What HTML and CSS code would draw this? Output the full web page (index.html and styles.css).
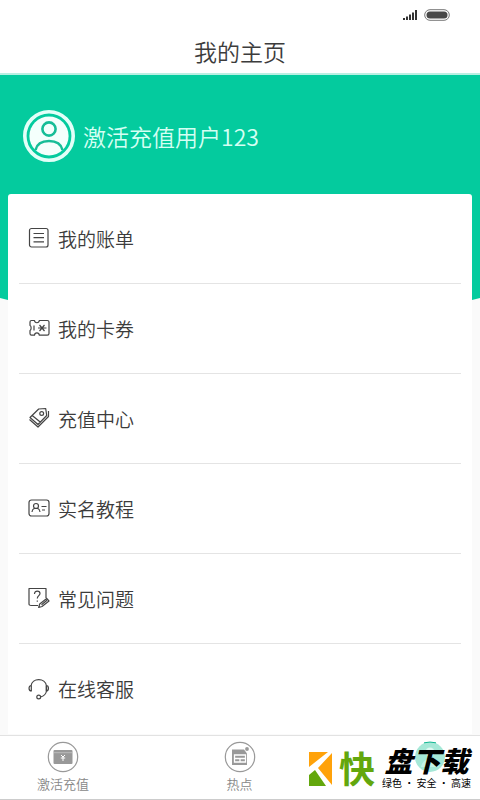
FILE: index.html
```html
<!DOCTYPE html>
<html lang="zh-CN">
<head>
<meta charset="utf-8">
<meta name="viewport" content="width=device-width, initial-scale=1">
<title>我的主页</title>
<link rel="stylesheet" href="styles.css">
</head>
<body>
<header class="top">
  <div class="status">
    <svg width="14" height="12" viewBox="0 0 14 12" fill="#333" aria-hidden="true"><path d="M0 9h2v2H0zM3 7.500h2V11H3zM6 5.500h2V11H6zM9 3.500h2V11H9zM12 1h2v10h-2z"/></svg>
    <svg width="26" height="12" viewBox="0 0 26 12" aria-hidden="true"><rect x=".7" y=".7" width="24.600" height="10.600" rx="5.300" fill="#fff" stroke="#777"/><rect x="2.500" y="2.500" width="21" height="7" rx="3.500" fill="#484848"/></svg>
  </div>
  <h1 class="title">我的主页</h1>
</header>
<main class="page">
  <section class="hero">
    <svg class="avatar" width="52" height="52" viewBox="0 0 52 52" aria-hidden="true">
      <circle cx="26" cy="26" r="24.200" fill="none" stroke="#e2fff8" stroke-width="3.600"/>
      <circle cx="26" cy="26" r="19.600" fill="#f4fffc"/>
      <circle cx="26" cy="19" r="6.600" fill="none" stroke="#17bd97" stroke-width="2.600"/>
      <path d="M12.500 40C14 33.500 19 31 26 31s12 2.500 13.500 9" fill="none" stroke="#17bd97" stroke-width="2.600"/>
    </svg>
    <p class="user">激活充值用户123</p>
  </section>
  <nav class="card">
    <a class="row" href="#bill">
      <svg class="icon" viewBox="0 0 22 22" aria-hidden="true"><rect x="1.500" y="1.500" width="18.500" height="18.500" rx="2"/><path d="M5.500 6.500h10.500M5.500 10.700h10.500M5.500 14.900h10.500"/></svg>
      <span>我的账单</span></a>
    <a class="row" href="#coupon">
      <svg class="icon" viewBox="0 0 22 22" aria-hidden="true"><path d="M3.500 3.500h3c.3 3 4.500 3 4.800 0h8c1 0 1.700.7 1.700 1.500v11.500c0 1-.7 1.700-1.700 1.700h-8c-.3-3-4.500-3-4.800 0h-3c-1 0-1.500-.7-1.500-1.700v-3c1.500-.5 1.500-4.500 0-5V5c0-1 .5-1.500 1.500-1.500zM6 8.500v5M10 11h8.500M11.500 8l2.500 3-2.500 3M16.500 8 14 11l2.500 3"/></svg>
      <span>我的卡券</span></a>
    <a class="row" href="#recharge">
      <svg class="icon" viewBox="0 0 22 22" aria-hidden="true"><path d="M2 10.500 10.700 2l7-.5 1 7-8.700 9zM4.200 8.500l8 6.500M1.500 12.500l8.500 7.500L20.500 9.500V4"/><circle cx="13.700" cy="6.500" r="1.900"/></svg>
      <span>充值中心</span></a>
    <a class="row" href="#identity">
      <svg class="icon" viewBox="0 0 22 22" aria-hidden="true"><rect x="1" y="3" width="20" height="16" rx="2.500"/><circle cx="8" cy="9" r="2.500"/><path d="M4 15c.5-5 7.500-5 8 0M13.500 9.500h5M14 13h3"/></svg>
      <span>实名教程</span></a>
    <a class="row" href="#faq">
      <svg class="icon" viewBox="0 0 22 22" aria-hidden="true"><path d="M10 18.500H3c-1 0-2-.5-2-1.500V1.500h17V11M6.500 7c0-4 5.500-3.500 5.500-.5 0 2.300-2.700 2-2.700 5M9.300 13.500v1.200M10.700 20.500l1-3.500 7-5.500 2.300 2.500-7 5.500zM13.500 17.700l5.500-4.500"/></svg>
      <span>常见问题</span></a>
    <a class="row" href="#service">
      <svg class="icon" viewBox="0 0 22 22" aria-hidden="true"><path d="M3 8c1-8.500 14.500-8.500 15.500 0v5c-.5 3-2.500 5-6 6M3.300 7.500C.3 7.500.3 13 3.300 13zM18.200 7.500c3 0 3 5.500 0 5.500z"/><circle cx="10.700" cy="19" r="1.900"/></svg>
      <span>在线客服</span></a>
  </nav>
</main>
<nav class="tabs">
  <a class="tab" href="#activate">
    <svg width="32" height="32" viewBox="0 0 32 32" aria-hidden="true"><circle cx="16" cy="16" r="14.700" fill="none" stroke="#999" stroke-width="1.200"/><rect x="6.500" y="9" width="19" height="14" rx="1" fill="#999"/><path d="M7 11.700h18" stroke="#bbb"/><path d="m14 14 2 2 2-2M13.800 17h4.400M16 16v4" fill="none" stroke="#fff"/></svg>
    <span>激活充值</span></a>
  <a class="tab" href="#hot">
    <svg width="32" height="32" viewBox="0 0 32 32" aria-hidden="true"><circle cx="16" cy="16" r="14.700" fill="none" stroke="#999" stroke-width="1.200"/><path d="M8 8.500h12l3 4V24H8z" fill="#999"/><circle cx="23" cy="8" r="1.900" fill="#999"/><path d="M10.500 14h11v7h-11zM10.500 17.500h11M16 17.500V21" fill="none" stroke="#fff" stroke-width="1.300"/></svg>
    <span>热点</span></a>
  <a class="tab" href="#me" aria-label="我的">
    <svg width="32" height="32" viewBox="0 0 32 32" aria-hidden="true"><circle cx="16" cy="16" r="15" fill="#a5e8d7"/><path d="M10 1.800q6-1.500 12 0" stroke="#14b894" fill="none"/><circle cx="16" cy="11" r="4.500" fill="#dcf8f1"/><path d="M7 26c2-11 16-11 18 0z" fill="#c4f1e6"/></svg>
  </a>
  <div class="brand">
    <svg width="23" height="34" viewBox="0 0 23 34" aria-hidden="true"><path d="M0 0h19L0 15zM23 1v32L9 16z" fill="#ffa20a"/><path d="M0 23 6 18l11 16H0z" fill="#63a70d"/></svg>
    <span class="brand-first">快</span>
    <div class="brand-side"><span class="brand-name">盘下载</span><span class="brand-note">绿色 · 安全 · 高速</span></div>
  </div>
</nav>
</body>
</html>
```
FILE: styles.css
```css
* { box-sizing: border-box; }

body {
  margin: 0;
  min-height: 100vh;
  display: flex;
  flex-direction: column;
  background: #fafafa;
  color: #3c3c3c;
  font-family: "Noto Sans CJK SC", sans-serif;
  font-weight: 350;
}

a { color: inherit; text-decoration: none; }
svg { display: block; flex: none; }

.top {
  background: #fff;
  border-bottom: 2px solid #b9efe2;
}

.status {
  display: flex;
  justify-content: flex-end;
  align-items: center;
  gap: 7px;
  height: 30px;
  padding-right: 30px;
}

.title {
  margin: 0;
  padding-bottom: 1px;
  font-size: 23px;
  font-weight: 350;
  line-height: 42px;
  text-align: center;
}

.page { flex: 1; }

.hero {
  display: flex;
  align-items: flex-start;
  gap: 8px;
  height: 225px;
  padding: 35px 23px 0;
  background: #04cb9e;
  clip-path: polygon(0 0, 100% 0, 100% 223px, calc(100% - 8px) 100%, 8px 100%, 0 223px);
}

.user {
  margin: 0;
  color: #d5fff3;
  font-size: 23px;
  line-height: 52px;
}

.card {
  position: relative;
  margin: -106px 8px 0;
  padding: 0 11px;
  background: #fff;
  border-radius: 3px 3px 0 0;
}

.row {
  display: flex;
  align-items: center;
  gap: 8px;
  height: 90px;
  padding: 0 0 1px 9px;
  border-bottom: 1px solid #e4e4e4;
  font-size: 19px;
}

.row:last-child { border-bottom: 0; }

.icon {
  width: 22px;
  height: 22px;
  fill: none;
  stroke: #444;
  stroke-width: 1.2;
  stroke-linejoin: round;
}

.tabs {
  position: relative;
  display: flex;
  justify-content: space-between;
  height: 65px;
  padding: 5px 23px 0 36px;
  background: #fff;
  border-top: 1px solid #e2e2e2;
  border-bottom: 1px solid #ccc;
}

.tab {
  display: flex;
  flex-direction: column;
  align-items: center;
  width: 54px;
  color: #888;
  font-size: 13px;
  line-height: 22px;
}

.tab:nth-child(2) { margin-right: 14px; }

.brand {
  position: absolute;
  right: 9px;
  bottom: 8px;
  display: flex;
  align-items: center;
  gap: 7px;
  height: 44px;
  color: #000;
}

.brand-first {
  color: #63a70d;
  font-size: 36px;
  font-weight: 700;
  line-height: 36px;
  padding-bottom: 4px;
}

.brand-side {
  display: flex;
  flex-direction: column;
  align-items: center;
}

.brand-name {
  font-size: 28px;
  font-style: italic;
  font-weight: 900;
  line-height: 28px;
}

.brand-note {
  font-size: 10px;
  font-weight: 400;
  line-height: 18px;
}
```
